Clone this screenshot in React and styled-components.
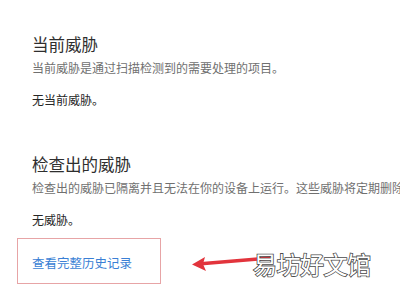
import React from 'react';
import styled, { createGlobalStyle } from 'styled-components';

const GlobalStyle = createGlobalStyle`
  html, body {
    margin: 0;
    padding: 0;
    background: #ffffff;
  }
  body {
    width: 400px;
    height: 300px;
    overflow: hidden;
    font-family: "Noto Sans CJK SC", "Noto Sans", sans-serif;
  }
`;

const sections = [
  {
    title: '当前威胁',
    desc: '当前威胁是通过扫描检测到的需要处理的项目。',
    status: '无当前威胁。'
  },
  {
    title: '检查出的威胁',
    desc: '检查出的威胁已隔离并且无法在你的设备上运行。这些威胁将定期删除。',
    status: '无威胁。'
  }
];

export default function App() {
  return (
    <Page>
      <GlobalStyle />
      {sections.map((s, i) => (
        <Section key={s.title} first={i === 0}>
          <Title>{s.title}</Title>
          <Desc>{s.desc}</Desc>
          <Status>{s.status}</Status>
        </Section>
      ))}
      <Bottom>
        <LinkBox>
          <HistoryLink href="#">查看完整历史记录</HistoryLink>
        </LinkBox>
        <Arrow viewBox="0 0 80 20" aria-hidden="true">
          <path d="M8 11 L80 5" stroke="#e2343c" strokeWidth="3.5" strokeLinecap="round" />
          <path d="M2 11.5 L15 4 L13 11 L16 18 Z" fill="#e2343c" />
        </Arrow>
        <Watermark>易坊好文馆</Watermark>
      </Bottom>
    </Page>
  );
}

const Page = styled.div`
  width: 400px;
  height: 300px;
  padding: 31px 0 0 32px;
  box-sizing: border-box;
  overflow: hidden;
`;

const Section = styled.section`
  margin-top: ${p => (p.first ? '0' : '42px')};
  white-space: nowrap;
`;

const Title = styled.h2`
  margin: 0;
  font-size: 16.5px;
  line-height: 26px;
  font-weight: 400;
  color: #2e2e2e;
`;

const Desc = styled.p`
  margin: 2px 0 0;
  font-size: 12px;
  line-height: 18px;
  color: #707070;
`;

const Status = styled.p`
  margin: ${p => (p.tight ? '13px' : '14px')} 0 0;
  font-size: 12px;
  line-height: 18px;
  color: #262626;
`;

const Bottom = styled.div`
  position: relative;
  margin: 9px 0 0 -15px;
  display: flex;
  align-items: center;
`;

const LinkBox = styled.div`
  width: 144px;
  height: 46px;
  box-sizing: border-box;
  border: 1.5px solid #e7a4a6;
  padding-left: 14px;
  display: flex;
  align-items: center;
`;

const HistoryLink = styled.a`
  font-size: 12.5px;
  color: #3a7fd5;
  text-decoration: none;
  margin-top: 3px;
`;

const Arrow = styled.svg`
  position: absolute;
  left: 173px;
  top: 15px;
  width: 80px;
  height: 20px;
`;

const Watermark = styled.div`
  position: absolute;
  left: 236px;
  top: 11px;
  font-size: 24px;
  line-height: 30px;
  color: #ffffff;
  -webkit-text-stroke: 1.6px #4a4a4a;
  paint-order: stroke fill;
  letter-spacing: -0.5px;
  white-space: nowrap;
`;
